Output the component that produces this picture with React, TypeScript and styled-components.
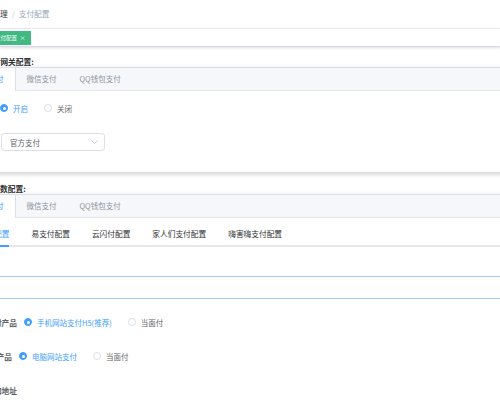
import styled, { createGlobalStyle } from 'styled-components';

const GlobalStyle = createGlobalStyle`
  html, body { margin: 0; padding: 0; background: #fff; }
  body {
    font-family: "Noto Sans CJK SC", "Noto Sans", sans-serif;
    overflow: hidden;
  }
  * { box-sizing: border-box; }
`;

const Page = styled.div`
  width: 500px;
  height: 400px;
  overflow: hidden;
  background: #fff;
`;

const Navbar = styled.div`
  height: 29px;
  display: flex;
  align-items: center;
  border-bottom: 1px solid #eef0f3;
`;

const Breadcrumb = styled.div`
  display: flex;
  align-items: center;
  font-size: 7.7px;
  line-height: 1;
`;

const Crumb = styled.span<{ $last?: boolean }>`
  color: ${({ $last }) => ($last ? '#97a8be' : '#303133')};
`;

const Sep = styled.span`
  margin: 0 4px;
  color: #c0c4cc;
`;

const TagsBar = styled.div`
  height: 18px;
  display: flex;
  align-items: center;
  border-bottom: 1px solid #d8dce5;
  box-shadow: 0 1px 3px 0 rgba(0, 0, 0, 0.12), 0 0 3px 0 rgba(0, 0, 0, 0.04);
`;

const Tag = styled.div`
  height: 14px;
  margin-left: -10px;
  padding: 0 5px;
  display: flex;
  align-items: center;
  background: #42b983;
  color: #fff;
  font-size: 5.5px;
`;

const TagClose = styled.span`
  width: 7px;
  margin-left: 2px;
  text-align: center;
  font-size: 6px;
  opacity: 0.9;
`;

const Main = styled.div`
  padding-top: 10px;
`;

const SectionTitle = styled.div<{ $gap?: number; $shift: number }>`
  margin-top: ${({ $gap }) => $gap ?? 0}px;
  margin-left: ${({ $shift }) => -$shift}px;
  height: 10px;
  line-height: 10px;
  font-size: 7.7px;
  font-weight: 700;
  color: #303133;
`;

const Card = styled.div`
  margin-left: -46px;
  width: 650px;
  border: 1px solid #dcdfe6;
  background: #fff;
  box-shadow: 0 2px 4px 0 rgba(0, 0, 0, 0.12), 0 0 6px 0 rgba(0, 0, 0, 0.04);
`;

const CardHeader = styled.div`
  height: 23px;
  display: flex;
  background: #f5f7fa;
  border-bottom: 1px solid #e4e7ed;
`;

const CardTab = styled.div<{ $active?: boolean }>`
  height: 23px;
  padding: 0 11px;
  line-height: 22px;
  font-size: 7.5px;
  color: ${({ $active }) => ($active ? '#409eff' : '#909399')};
  background: ${({ $active }) => ($active ? '#fff' : 'transparent')};
  border-right: 1px solid ${({ $active }) => ($active ? '#dcdfe6' : 'transparent')};
`;

const CardBody = styled.div<{ $top: number; $bottom: number }>`
  padding: ${({ $top }) => $top}px 0 ${({ $bottom }) => $bottom}px 45px;
`;

const RadioRow = styled.div`
  height: 10px;
  display: flex;
  align-items: center;
`;

const Radio = styled.div<{ $checked?: boolean }>`
  display: flex;
  align-items: center;
  margin-right: 16px;
  font-size: 7.5px;
  color: ${({ $checked }) => ($checked ? '#409eff' : '#606266')};
  white-space: nowrap;
`;

const RadioDot = styled.span<{ $checked?: boolean }>`
  width: 8px;
  height: 8px;
  margin-right: 5px;
  border-radius: 50%;
  border: 1px solid ${({ $checked }) => ($checked ? '#409eff' : '#dcdfe6')};
  background: ${({ $checked }) => ($checked ? '#409eff' : '#fff')};
  display: flex;
  align-items: center;
  justify-content: center;
  &::after {
    content: '';
    width: 3px;
    height: 3px;
    border-radius: 50%;
    background: #fff;
    display: ${({ $checked }) => ($checked ? 'block' : 'none')};
  }
`;

const Select = styled.div`
  margin-top: 20px;
  margin-left: 1px;
  width: 104px;
  height: 18px;
  padding: 0 6px 0 8px;
  display: flex;
  align-items: center;
  justify-content: space-between;
  border: 1px solid #dcdfe6;
  border-radius: 3px;
  font-size: 7.5px;
  color: #606266;
`;

const InnerTabs = styled.div`
  margin-left: -40px;
  display: flex;
  border-bottom: 2px solid #e4e7ed;
`;

const InnerTab = styled.div<{ $active?: boolean }>`
  position: relative;
  height: 22px;
  padding: 0 11px;
  line-height: 22px;
  font-size: 7.7px;
  color: ${({ $active }) => ($active ? '#409eff' : '#303133')};
  white-space: nowrap;
  &::after {
    content: '';
    position: absolute;
    left: 11px;
    right: 11px;
    bottom: -2px;
    height: 2px;
    background: #409eff;
    display: ${({ $active }) => ($active ? 'block' : 'none')};
  }
`;

const InputBox = styled.div`
  margin-top: 29px;
  margin-left: -60px;
  width: 700px;
  height: 23px;
  border: 1px solid #a0cfff;
`;

const FormItem = styled.div<{ $gap: number }>`
  margin-top: ${({ $gap }) => $gap}px;
  height: 18px;
  display: flex;
  align-items: center;
`;

const FormLabel = styled.div<{ $end: number }>`
  width: 60px;
  margin-left: ${({ $end }) => $end - 60}px;
  margin-right: 7px;
  text-align: right;
  font-size: 7.7px;
  font-weight: 700;
  color: #606266;
  white-space: nowrap;
`;

function Chevron() {
  return (
    <svg width="7" height="4" viewBox="0 0 7 4">
      <polyline points="0.5,0.5 3.5,3.5 6.5,0.5" fill="none" stroke="#c0c4cc" strokeWidth="0.8" />
    </svg>
  );
}

export default function App() {
  return (
    <Page>
      <GlobalStyle />
      <Navbar>
        <Breadcrumb>
          <Crumb>理</Crumb>
          <Sep>/</Sep>
          <Crumb $last>支付配置</Crumb>
        </Breadcrumb>
      </Navbar>
      <TagsBar>
        <Tag>
          支付配置
          <TagClose>×</TagClose>
        </Tag>
      </TagsBar>
      <Main>
        <SectionTitle $shift={15}>支付网关配置:</SectionTitle>
        <Card>
          <CardHeader>
            <CardTab $active>支付宝支付</CardTab>
            <CardTab>微信支付</CardTab>
            <CardTab>QQ钱包支付</CardTab>
          </CardHeader>
          <CardBody $top={12} $bottom={21}>
            <RadioRow>
              <Radio $checked>
                <RadioDot $checked />
                开启
              </Radio>
              <Radio>
                <RadioDot />
                关闭
              </Radio>
            </RadioRow>
            <Select>
              官方支付
              <Chevron />
            </Select>
          </CardBody>
        </Card>

        <SectionTitle $gap={11} $shift={23}>支付参数配置:</SectionTitle>
        <Card>
          <CardHeader>
            <CardTab $active>支付宝支付</CardTab>
            <CardTab>微信支付</CardTab>
            <CardTab>QQ钱包支付</CardTab>
          </CardHeader>
          <CardBody $top={5} $bottom={20}>
            <InnerTabs>
              <InnerTab $active>支付宝配置</InnerTab>
              <InnerTab>易支付配置</InnerTab>
              <InnerTab>云闪付配置</InnerTab>
              <InnerTab>家人们支付配置</InnerTab>
              <InnerTab>嗨害嗨支付配置</InnerTab>
            </InnerTabs>
            <InputBox />
            <FormItem $gap={14}>
              <FormLabel $end={17}>手机支付产品</FormLabel>
              <Radio $checked>
                <RadioDot $checked />
                手机网站支付H5(推荐)
              </Radio>
              <Radio>
                <RadioDot />
                当面付
              </Radio>
            </FormItem>
            <FormItem $gap={16}>
              <FormLabel $end={12}>电脑产品</FormLabel>
              <Radio $checked>
                <RadioDot $checked />
                电脑网站支付
              </Radio>
              <Radio>
                <RadioDot />
                当面付
              </Radio>
            </FormItem>
            <FormItem $gap={16}>
              <FormLabel $end={17}>异步通知地址</FormLabel>
            </FormItem>
          </CardBody>
        </Card>
      </Main>
    </Page>
  );
}
